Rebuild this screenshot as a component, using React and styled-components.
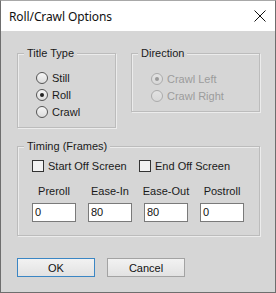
import React from "react"
import styled, { createGlobalStyle } from "styled-components"

const Global = createGlobalStyle`
  html, body {
    margin: 0;
    padding: 0;
    background: #ffffff;
  }
  * {
    box-sizing: border-box;
  }
`

const Window = styled.div`
  width: 276px;
  height: 293px;
  border: 1px solid #6e6e6e;
  border-top-color: #a8a8a8;
  background: #d6d6d6;
  display: flex;
  flex-direction: column;
  font-family: "Liberation Sans", Arial, sans-serif;
  font-size: 11px;
  color: #1a1a1a;
  white-space: nowrap;
`

const TitleBar = styled.div`
  height: 30px;
  background: #ffffff;
  display: flex;
  align-items: center;
  justify-content: space-between;
  padding: 0 8px 0 8px;
  flex-shrink: 0;
`

const Title = styled.div`
  font-family: "Noto Sans", "Open Sans", sans-serif;
  font-size: 12px;
  color: #111;
  letter-spacing: -0.1px;
`

const Close = styled.div`
  width: 12px;
  height: 12px;
  margin-right: 1px;
  display: flex;
`

const Body = styled.div`
  padding: 22px 0 0 16px;
  display: flex;
  flex-direction: column;
`

const TopRow = styled.div`
  display: flex;
  align-items: flex-start;
  gap: 15px;
`

const Group = styled.div`
  position: relative;
  width: ${p => p.$w}px;
  height: ${p => p.$h}px;
  border: 1px solid #bcbcbc;
  box-shadow: inset 1px 1px 0 #ececec, 1px 1px 0 #ececec;
  padding: ${p => p.$pad};
  margin-top: ${p => p.$mt || 0}px;
`

const Caption = styled.span`
  position: absolute;
  top: -7px;
  left: 6px;
  padding: 0 3px;
  background: #d6d6d6;
  line-height: 13px;
  color: #1a1a1a;
`

const RadioList = styled.div`
  display: flex;
  flex-direction: column;
`

const RadioRow = styled.div`
  height: 17px;
  display: flex;
  align-items: center;
  gap: 4px;
  color: ${p => (p.$disabled ? "#9c9c9c" : "#1a1a1a")};
`

const Circle = styled.span`
  width: 12px;
  height: 12px;
  border-radius: 50%;
  border: 1px solid ${p => (p.$disabled ? "#ababab" : "#555")};
  background: ${p =>
    p.$disabled
      ? "linear-gradient(#e2e2e2, #d8d8d8)"
      : "linear-gradient(#f6f6f6, #dcdcdc)"};
  display: flex;
  align-items: center;
  justify-content: center;
  &::after {
    content: "";
    width: 4px;
    height: 4px;
    border-radius: 50%;
    background: ${p => (p.$disabled ? "#9a9a9a" : "#222")};
    display: ${p => (p.$on ? "block" : "none")};
  }
`

const CheckRow = styled.div`
  display: flex;
  align-items: center;
  height: 13px;
`

const Check = styled.div`
  display: flex;
  align-items: center;
  gap: 4px;
  width: ${p => p.$w}px;
`

const Box = styled.span`
  width: 12px;
  height: 12px;
  border: 1px solid #333;
  background: #f2f2f2;
`

const Fields = styled.div`
  display: grid;
  grid-template-columns: repeat(4, 44px);
  column-gap: 12px;
  margin-top: 13px;
`

const Field = styled.div`
  display: flex;
  flex-direction: column;
  align-items: center;
  gap: 5px;
  line-height: 13px;
`

const Input = styled.div`
  width: 44px;
  height: 19px;
  background: #ffffff;
  border: 1px solid #7a7a7a;
  padding-left: 2px;
  display: flex;
  align-items: center;
  color: #111;
`

const Buttons = styled.div`
  display: flex;
  gap: 12px;
  margin-top: 22px;
`

const Button = styled.div`
  width: 78px;
  height: 19px;
  display: flex;
  align-items: center;
  justify-content: center;
  border: 1px solid ${p => (p.$default ? "#3b86c4" : "#a3a3a3")};
  background: linear-gradient(#f2f2f2, #e2e2e2);
  color: #111;
`

export default function App() {
  return (
    <>
      <Global />
      <Window>
        <TitleBar>
          <Title>Roll/Crawl Options</Title>
          <Close>
            <svg width="12" height="12" viewBox="0 0 12 12">
              <path d="M0.5 0.5 L11.5 11.5 M11.5 0.5 L0.5 11.5" stroke="#111" strokeWidth="1" fill="none" />
            </svg>
          </Close>
        </TitleBar>
        <Body>
          <TopRow>
            <Group $w={99} $h={75} $pad="15px 0 0 18px">
              <Caption>Title Type</Caption>
              <RadioList>
                <RadioRow><Circle />Still</RadioRow>
                <RadioRow><Circle $on />Roll</RadioRow>
                <RadioRow><Circle />Crawl</RadioRow>
              </RadioList>
            </Group>
            <Group $w={129} $h={59} $pad="16px 0 0 19px">
              <Caption>Direction</Caption>
              <RadioList>
                <RadioRow $disabled><Circle $disabled $on />Crawl Left</RadioRow>
                <RadioRow $disabled><Circle $disabled />Crawl Right</RadioRow>
              </RadioList>
            </Group>
          </TopRow>
          <Group $w={243} $h={90} $mt={18} $pad="12px 0 0 14px">
            <Caption>Timing (Frames)</Caption>
            <CheckRow>
              <Check $w={107}><Box />Start Off Screen</Check>
              <Check><Box />End Off Screen</Check>
            </CheckRow>
            <Fields>
              <Field>Preroll<Input>0</Input></Field>
              <Field>Ease-In<Input>80</Input></Field>
              <Field>Ease-Out<Input>80</Input></Field>
              <Field>Postroll<Input>0</Input></Field>
            </Fields>
          </Group>
          <Buttons>
            <Button $default>OK</Button>
            <Button>Cancel</Button>
          </Buttons>
        </Body>
      </Window>
    </>
  )
}
